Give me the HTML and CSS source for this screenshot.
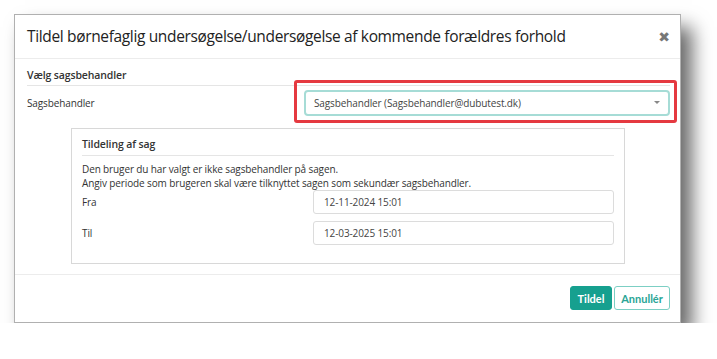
FILE: index.html
```html
<!DOCTYPE html>
<html>
<head>
    <meta charset="UTF-8">
    <title>Tildel sag</title>
    <link rel="stylesheet" href="styles.css">
</head>
<body>
    <div class="modal">
        <div class="modal-header">
            <h2>Tildel børnefaglig undersøgelse/undersøgelse af kommende forældres forhold</h2>
            <span class="close">&#x2716;</span>
        </div>

        <div class="modal-body">
            <div class="section-title">Vælg sagsbehandler</div>
            <div class="form-row">
                <label>Sagsbehandler</label>
                <div class="select-wrap highlight">
                    <div class="select">
                        <span>Sagsbehandler (Sagsbehandler@dubutest.dk)</span>
                        <span class="caret"></span>
                    </div>
                </div>
            </div>

            <div class="panel">
                <div class="panel-title">Tildeling af sag</div>
                <p>Den bruger du har valgt er ikke sagsbehandler på sagen.<br>
                   Angiv periode som brugeren skal være tilknyttet sagen som sekundær sagsbehandler.</p>
                <div class="date-row">
                    <label>Fra</label>
                    <div class="input">12-11-2024 15:01</div>
                </div>
                <div class="date-row">
                    <label>Til</label>
                    <div class="input">12-03-2025 15:01</div>
                </div>
            </div>
        </div>

        <div class="modal-footer">
            <button class="btn primary">Tildel</button>
            <button class="btn outline">Annullér</button>
        </div>
    </div>
</body>
</html>
```

FILE: styles.css
```css
body {
    margin: 0;
    background: #fff;
    font-family: "Open Sans", sans-serif;
    color: #333;
}
.modal {
    margin: 14px 0 0 14px;
    width: 667px;
    height: 309px;
    background: #fff;
    border: 1px solid #b0b0b0;
    box-sizing: border-box;
    box-shadow: 11px 13px 18px rgba(0,0,0,0.6);
    display: flex;
    flex-direction: column;
}
.modal-header {
    height: 43px;
    display: flex;
    align-items: center;
    justify-content: space-between;
    padding: 0 10px 0 12px;
    border-bottom: 1px solid #ececec;
}
h2 {
    margin: 0;
    font-size: 15.5px;
    font-weight: 400;
    letter-spacing: -0.35px;
    color: #222;
}
.close {
    font-size: 14px;
    color: #777;
    font-family: "DejaVu Sans", sans-serif;
    font-weight: bold;
    margin-top: 2px;
}
.modal-body {
    padding: 9px 10px 10px 12px;
    flex: 1;
    font-size: 10px;
    letter-spacing: -0.12px;
}
.section-title {
    font-size: 10.5px;
    font-weight: 600;
    color: #333;
    padding-bottom: 3px;
    border-bottom: 1px solid #e5e5e5;
}
.form-row {
    display: flex;
    align-items: center;
    margin-top: 4px;
}
.form-row label {
    width: 277px;
}
.select-wrap {
    position: relative;
    width: 366px;
}
.highlight::after {
    content: "";
    position: absolute;
    left: -10px;
    right: -7px;
    top: -10px;
    bottom: -7px;
    border: 3px solid #e53940;
    border-radius: 3px;
}
.select {
    height: 26px;
    box-sizing: border-box;
    border: 2px solid #a6dcd6;
    border-radius: 4px;
    display: flex;
    align-items: center;
    justify-content: space-between;
    padding: 0 8px 0 8px;
    color: #444;
}
.caret {
    width: 0;
    height: 0;
    border-left: 3px solid transparent;
    border-right: 3px solid transparent;
    border-top: 3px solid #888;
}
.panel {
    margin: 12px 0 0 44px;
    width: 554px;
    height: 136px;
    box-sizing: border-box;
    border: 1px solid #d8d8d8;
    padding: 8px 10px 0 10px;
}
.panel-title {
    font-weight: 600;
    font-size: 10.5px;
    padding-bottom: 4px;
    border-bottom: 1px solid #e5e5e5;
}
.panel p {
    margin: 6px 0 0 0;
    line-height: 14px;
}
.date-row {
    display: flex;
    align-items: center;
    margin-bottom: 7px;
}
.date-row label {
    width: 231px;
}
.input {
    width: 301px;
    height: 24px;
    box-sizing: border-box;
    border: 1px solid #dcdcdc;
    border-radius: 3px;
    padding: 0 10px;
    display: flex;
    align-items: center;
    color: #444;
}
.modal-footer {
    height: 48px;
    border-top: 1px solid #ececec;
    display: flex;
    justify-content: flex-end;
    align-items: center;
    gap: 2px;
    padding: 0 10px;
}
.btn {
    height: 24px;
    border-radius: 3px;
    font-family: Lato, sans-serif;
    font-size: 11px;
    font-weight: bold;
    padding: 0;
    cursor: pointer;
}
.btn.primary {
    background: #16a08f;
    border: 1px solid #16a08f;
    color: #fff;
    width: 42px;
}
.btn.outline {
    background: #fff;
    border: 1px solid #7ccfc4;
    color: #2aa596;
    width: 56px;
}
```
